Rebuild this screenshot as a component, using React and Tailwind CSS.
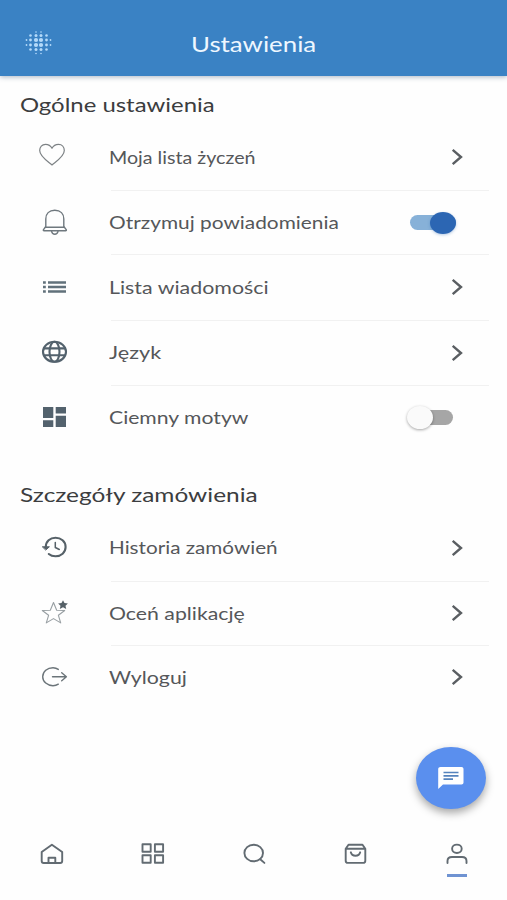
import React, { useLayoutEffect, useRef, useState } from "react";

// Text set in a wide cut: the glyphs are stretched to fill the given width.
function WideText({ width, className = "", children }) {
  const ref = useRef(null);
  const [scale, setScale] = useState(1);
  useLayoutEffect(() => {
    setScale(width / ref.current.offsetWidth);
  }, [width]);
  return (
    <span
      ref={ref}
      className={"inline-block origin-left whitespace-nowrap " + className}
      style={{ transform: `scaleX(${scale})` }}
    >
      {children}
    </span>
  );
}

function Icon({ children, className = "" }) {
  return (
    <svg
      viewBox="0 0 32 32"
      className={"block h-8 w-8 " + className}
      fill="none"
      stroke="#5b676f"
      strokeWidth="1.2"
      strokeLinecap="round"
      strokeLinejoin="round"
    >
      {children}
    </svg>
  );
}

const icons = {
  heart: (
    <path
      d="M14 25C9.500 21.200 1.700 16.500 1.700 10.600 1.700 7 4 4.300 7.500 4.300c2.900 0 5.300 1.600 6.500 4 1.200-2.400 3.600-4 6.500-4 3.500 0 5.800 2.700 5.800 6.300 0 5.900-7.800 10.600-12.300 14.400z"
      stroke="#7d8285"
    />
  ),
  bell: (
    <g stroke="#6f787e" strokeWidth="1.4">
      <path d="M7.800 20.500V13C7.800 8 11 4.300 16.800 4.300S25.800 8 25.800 13v7.500l2.400 3.200c.4.700.2 1.100-.6 1.100H6.100c-.8 0-1-.4-.6-1.100z" />
      <path d="M7.500 21.300h18.700M13.600 25.300c.4 2 1.500 2.900 3.200 2.900s2.800-.9 3.200-2.900" />
    </g>
  ),
  list: (
    <g stroke="#61717b" strokeWidth="2.300" strokeLinecap="butt">
      <path d="M5 11.500h2.800M10 11.500h18M5 16h2.800M10 16h18M5 20.500h2.800M10 20.500h18" />
    </g>
  ),
  globe: (
    <g stroke="#53626d" strokeWidth="2.100">
      <ellipse cx="16.500" cy="15.800" rx="11.500" ry="10" />
      <ellipse cx="16.500" cy="15.800" rx="5" ry="10" />
      <path d="M6 12.400h21M6 19.200h21" />
    </g>
  ),
  dashboard: (
    <path
      d="M5 6h10.300v11H5zM17.700 6H28v6.500H17.700zM5 19.200h10.300V26H5zM17.700 14.800H28V26H17.700z"
      fill="#53626d"
      stroke="none"
    />
  ),
  history: (
    <g stroke="#566168" strokeWidth="2.100">
      <path d="M7.800 16C7.800 10.500 12 6.700 17.500 6.700S27.600 10.600 27.600 16s-4.500 9.300-10.100 9.300c-2.700 0-5-.8-6.700-2.300" />
      <path d="M4.700 15.800h6.700l-3.400 3z" fill="#566168" strokeWidth="1" />
      <path d="M17.300 11.500v5l4 2" strokeWidth="1.500" />
    </g>
  ),
  star: (
    <g>
      <path
        d="M15.500 5.500l3.200 7.700 8 .3-6.300 4.800 2.300 7.600-7.200-4.300-7.200 4.300 2.300-7.600-6.300-4.800 8-.3z"
        stroke="#989fa3"
        strokeWidth="1.100"
      />
      <path
        d="M25 3.200l1.500 2.900 3.400.3-2.400 2.300.7 3.300-3.200-1.700-3.200 1.700.7-3.300-2.400-2.300 3.400-.3z"
        fill="#566168"
        stroke="none"
      />
    </g>
  ),
  logout: (
    <path
      d="M20.300 8.400C18.800 7.300 17 6.700 15 6.700c-5.700 0-10.300 4-10.300 9s4.600 9 10.300 9c2 0 3.800-.5 5.300-1.500M14.500 15.700h13.700M23.700 11.700l4.700 4-4.700 4"
      stroke="#6b7479"
      strokeWidth="1.400"
    />
  ),
};

function Chevron() {
  return (
    <svg viewBox="0 0 16 18" className="mr-[42px] mb-px block h-[18px] w-4" fill="none" stroke="#5a5e62" strokeWidth="2.400">
      <path d="M3.700 1.800L12 9l-8.300 7.200" />
    </svg>
  );
}

function Switch({ on }) {
  return on ? (
    <span className="mr-[51px] flex h-[15px] w-[46px] shrink-0 items-center justify-end rounded-full bg-[#87b1d8]">
      <span className="h-[22px] w-[26px] shrink-0 rounded-[50%] bg-[#2c66b3] shadow-[0_1px_3px_rgba(44,102,179,0.35)]" />
    </span>
  ) : (
    <span className="mr-[54px] flex h-[15px] w-[43px] shrink-0 items-center rounded-full bg-[#a6a6a6]">
      <span className="-ml-[3px] h-[23px] w-[26px] shrink-0 rounded-[50%] bg-[#fafafa] shadow-[0_1px_3px_rgba(0,0,0,0.35)]" />
    </span>
  );
}

function Row({ icon, label, width, control, last, iconShift = "pb-[3px]", className = "h-[65px]" }) {
  return (
    <div className={"flex pl-[38px] " + className}>
      <div className={"flex w-[73px] shrink-0 items-center " + iconShift}>
        <Icon>{icons[icon]}</Icon>
      </div>
      <div
        className={
          "mr-[18px] flex flex-1 items-center justify-between border-b " +
          (last ? "border-transparent" : "border-[#f1f1f1]")
        }
      >
        <WideText width={width} className="-ml-[2px] text-[17.500px] leading-6 text-[#55575a]">
          {label}
        </WideText>
        <div className="-mr-[18px]">
          <div className="flex w-[100px] justify-end">{control || <Chevron />}</div>
        </div>
      </div>
    </div>
  );
}

const dots = [
  [12, 1, 0.8], [17, 1, 0.8],
  [6.500, 4.500, 1.300], [12, 4.500, 1.500], [17, 4.500, 1.500], [22.500, 4.500, 1.300],
  [2.500, 9, 0.9], [6.500, 9, 1.400], [12, 9, 2.100], [17, 9, 2.100], [22.500, 9, 1.400], [26.500, 9, 0.9],
  [2.500, 14, 0.9], [6.500, 14, 1.400], [12, 14, 2.100], [17, 14, 2.100], [22.500, 14, 1.400], [26.500, 14, 0.9],
  [6.500, 18.500, 1.300], [12, 18.500, 1.500], [17, 18.500, 1.500], [22.500, 18.500, 1.300],
  [12, 22.500, 0.8], [17, 22.500, 0.8],
];

export default function App() {
  return (
    <div className="flex h-[900px] w-full flex-col overflow-hidden bg-[#fefefe] font-['Lato',sans-serif]">
      <header className="flex h-[76px] shrink-0 bg-[#3a82c4] pt-[31px] pl-6 shadow-[0_1px_5px_rgba(40,70,110,0.4)]">
        <svg viewBox="0 0 29 24" className="h-6 w-[29px]" fill="#b4dafa">
          {dots.map(([x, y, r]) => (
            <circle key={x + "-" + y} cx={x} cy={y} r={r} />
          ))}
        </svg>
        <h1 className="-mt-px ml-[138px] h-7 leading-7 text-[#eef7ff]">
          <WideText width={125} className="text-[21.500px] leading-7">Ustawienia</WideText>
        </h1>
      </header>

      <h2 className="h-[49px] shrink-0 pt-[15px] pl-[19.500px]">
        <WideText width={195} className="text-[19.500px] leading-7 text-[#3c3d3f]">Ogólne ustawienia</WideText>
      </h2>
      <section className="shrink-0">
        <Row icon="heart" label="Moja lista życzeń" width={146} iconShift="pb-[5px]" className="h-[66px]" />
        <Row icon="bell" label="Otrzymuj powiadomienia" width={230} control={<Switch on />} className="h-16" />
        <Row icon="list" label="Lista wiadomości" width={160} className="h-[66px]" />
        <Row icon="globe" label="Język" width={52} />
        <Row icon="dashboard" label="Ciemny motyw" width={139} control={<Switch />} last iconShift="pb-[2px]" className="h-16" />
      </section>

      <h2 className="h-[65px] shrink-0 pt-[31px] pl-[19.500px]">
        <WideText width={238} className="text-[19.500px] leading-7 text-[#3c3d3f]">Szczegóły zamówienia</WideText>
      </h2>
      <section className="shrink-0">
        <Row icon="history" label="Historia zamówień" width={169} className="h-[67px]" />
        <Row icon="star" label="Oceń aplikację" width={136} className="h-16" />
        <Row icon="logout" label="Wyloguj" width={78} last iconShift="pb-[2px]" className="h-16" />
      </section>

      <div className="flex flex-1 items-end justify-end pr-[21px] pb-[13px]">
        <button className="flex h-[62px] w-[70px] items-center justify-center rounded-[50%] bg-[#5a8fee] shadow-[0_4px_9px_rgba(0,0,0,0.35)]">
          <svg viewBox="0 0 28 24" className="h-6 w-7" fill="#fff">
            <path d="M3.500 1h21c1.200 0 2 .8 2 2v13.500c0 1.200-.8 2-2 2H6L1.200 23V3c0-1.200 1-2 2.300-2z" />
            <path d="M6.500 6.500h15M6.500 9.800h15M6.500 13.200h9.500" stroke="#5583bd" strokeWidth="1.700" />
          </svg>
        </button>
      </div>

      <nav className="flex h-[78px] shrink-0 justify-between px-[35px] pt-4">
        <Icon>
          <g stroke="#626b72" strokeWidth="1.900">
            <path d="M6.700 14l10.200-7.300L27.200 14v9c0 1.400-.7 2-2 2H8.700c-1.300 0-2-.6-2-2z" />
            <path d="M13.500 25v-5.300h6.800V25" />
          </g>
        </Icon>
        <Icon>
          <path
            d="M6.500 6.300h8.200v7.400H6.500zM18.900 6.300h8.200v7.400h-8.200zM6.500 17.300h8.200v7.400H6.500zM18.900 17.300h8.200v7.400h-8.200z"
            stroke="#626b72"
            strokeWidth="1.900"
          />
        </Icon>
        <Icon>
          <g stroke="#626b72" strokeWidth="1.900">
            <ellipse cx="15.700" cy="15" rx="9.300" ry="8.300" />
            <path d="M22.200 21.200l4.200 3.700" />
          </g>
        </Icon>
        <Icon>
          <g stroke="#626b72" strokeWidth="1.900">
            <path d="M6.700 10.700L9.500 6.700h14l2.800 4v12c0 1.400-.8 2.200-2.200 2.200H8.900c-1.400 0-2.200-.8-2.200-2.200zM6.700 10.700h19.600" />
            <path d="M11.800 14.300c.6 2.300 2.400 3.500 4.700 3.500s4.100-1.200 4.700-3.500" />
          </g>
        </Icon>
        <div className="flex flex-col items-center">
          <Icon>
            <g stroke="#626b72" strokeWidth="1.900">
              <ellipse cx="16.900" cy="10.800" rx="4.800" ry="4.200" />
              <path d="M7.500 25v-2c0-2.500 1.800-4 4.500-4h10c2.700 0 4.500 1.500 4.500 4v2" />
            </g>
          </Icon>
          <span className="mt-[4px] ml-[1px] h-[2.500px] w-5 bg-[#6f93d2]" />
        </div>
      </nav>
    </div>
  );
}
